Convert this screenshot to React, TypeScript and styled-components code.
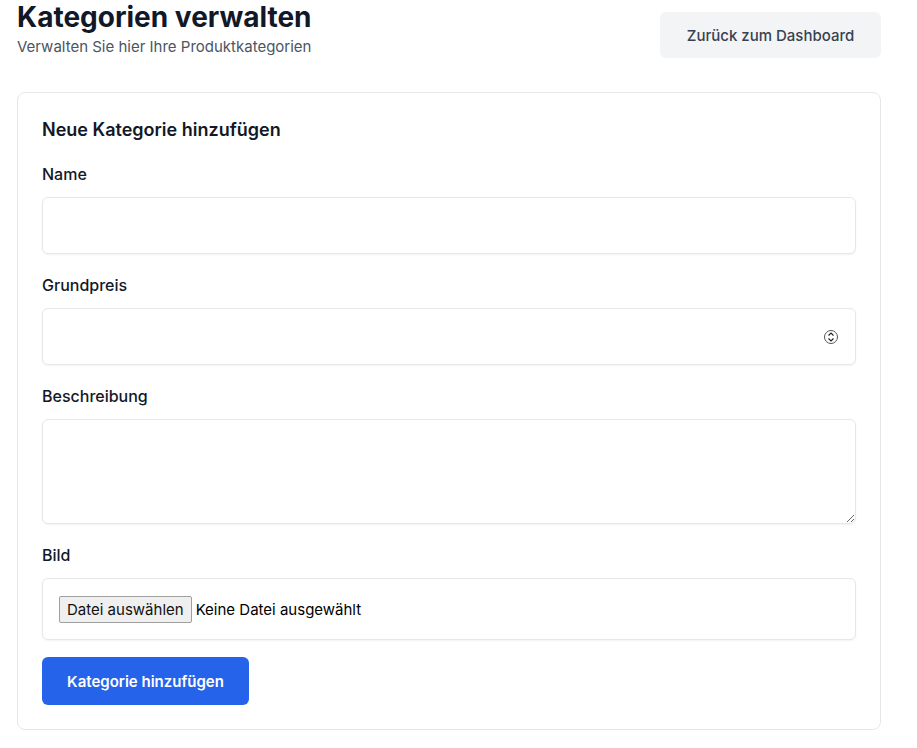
import React from "react";
import styled, { createGlobalStyle } from "styled-components";

const Global = createGlobalStyle`
  body { margin: 0; background: #fff; font-family: Inter, "Noto Sans", sans-serif; color: #111827; }
  * { box-sizing: border-box; }
`;

const Page = styled.div`
  padding: 0 36px 16px 17px;
`;
const Header = styled.div`
  display: flex;
  justify-content: space-between;
  align-items: flex-start;
  margin-bottom: 33px;
`;
const Title = styled.h1`
  margin: 0;
  font-size: 28px;
  line-height: 35px;
  font-weight: 700;
  color: #111827;
`;
const Sub = styled.p`
  margin: 0;
  font-size: 15px;
  line-height: 24px;
  color: #4b5563;
`;
const BackButton = styled.button`
  margin-top: 12px;
  height: 46px;
  width: 221px;
  border: none;
  border-radius: 6px;
  background: #f3f4f6;
  color: #374151;
  font: 500 15px Inter, sans-serif;
`;
const Card = styled.div`
  border: 1px solid #e5e7eb;
  border-radius: 8px;
  padding: 23px 24px 24px;
  display: flex;
  flex-direction: column;
`;
const CardTitle = styled.h2`
  margin: 0 0 18px;
  font-size: 18px;
  line-height: 28px;
  font-weight: 600;
`;
const Field = styled.div`
  display: flex;
  flex-direction: column;
  margin-bottom: 19px;
`;
const Label = styled.label`
  font-size: 16px;
  line-height: 24px;
  font-weight: 500;
  color: #111827;
  margin-bottom: 11px;
`;
const boxCss = `
  border: 1px solid #e5e7eb;
  border-radius: 6px;
  box-shadow: 0 1px 2px rgba(0,0,0,0.05);
  background: #fff;
  font: 15px Inter, sans-serif;
`;
const Input = styled.input`
  ${boxCss}
  height: 57px;
  padding: 0 12px;
  width: 100%;
  &::-webkit-inner-spin-button { opacity: 0; }
`;
const InputWrap = styled.div`
  position: relative;
`;
const Spin = styled.svg`
  position: absolute;
  right: 18px;
  top: 21px;
`;
const TextArea = styled.textarea`
  ${boxCss}
  height: 105px;
  padding: 12px;
  resize: vertical;
`;
const FileBox = styled.div`
  ${boxCss}
  height: 62px;
  display: flex;
  align-items: center;
  padding: 0 16px;
  gap: 4px;
  font-size: 15px;
  color: #000;
`;
const FileBtn = styled.span`
  background: #efefef;
  border: 1px solid #a0a0a0;
  border-radius: 2px;
  padding: 3px 7px;
  font-size: 15px;
  color: #111;
`;
const Submit = styled.button`
  margin-top: -2px;
  align-self: flex-start;
  width: 207px;
  height: 48px;
  border: none;
  border-radius: 6px;
  background: #2563eb;
  color: #fff;
  font: 600 15px Inter, sans-serif;
`;

export default function App() {
  return (
    <Page>
      <Global />
      <Header>
        <div>
          <Title>Kategorien verwalten</Title>
          <Sub>Verwalten Sie hier Ihre Produktkategorien</Sub>
        </div>
        <BackButton>Zurück zum Dashboard</BackButton>
      </Header>
      <Card>
        <CardTitle>Neue Kategorie hinzufügen</CardTitle>
        <Field>
          <Label>Name</Label>
          <Input type="text" />
        </Field>
        <Field>
          <Label>Grundpreis</Label>
          <InputWrap>
            <Input type="number" />
            <Spin width="14" height="16" viewBox="0 0 14 16">
              <circle cx="7" cy="8" r="6.5" fill="#fff" stroke="#555" strokeWidth="1" />
              <path d="M4.5 6.5 L7 4 L9.5 6.5 M4.5 9.5 L7 12 L9.5 9.5" fill="none" stroke="#222" strokeWidth="1.2" />
            </Spin>
          </InputWrap>
        </Field>
        <Field>
          <Label>Beschreibung</Label>
          <TextArea />
        </Field>
        <Field>
          <Label>Bild</Label>
          <FileBox>
            <FileBtn>Datei auswählen</FileBtn>
            Keine Datei ausgewählt
          </FileBox>
        </Field>
        <Submit>Kategorie hinzufügen</Submit>
      </Card>
    </Page>
  );
}
